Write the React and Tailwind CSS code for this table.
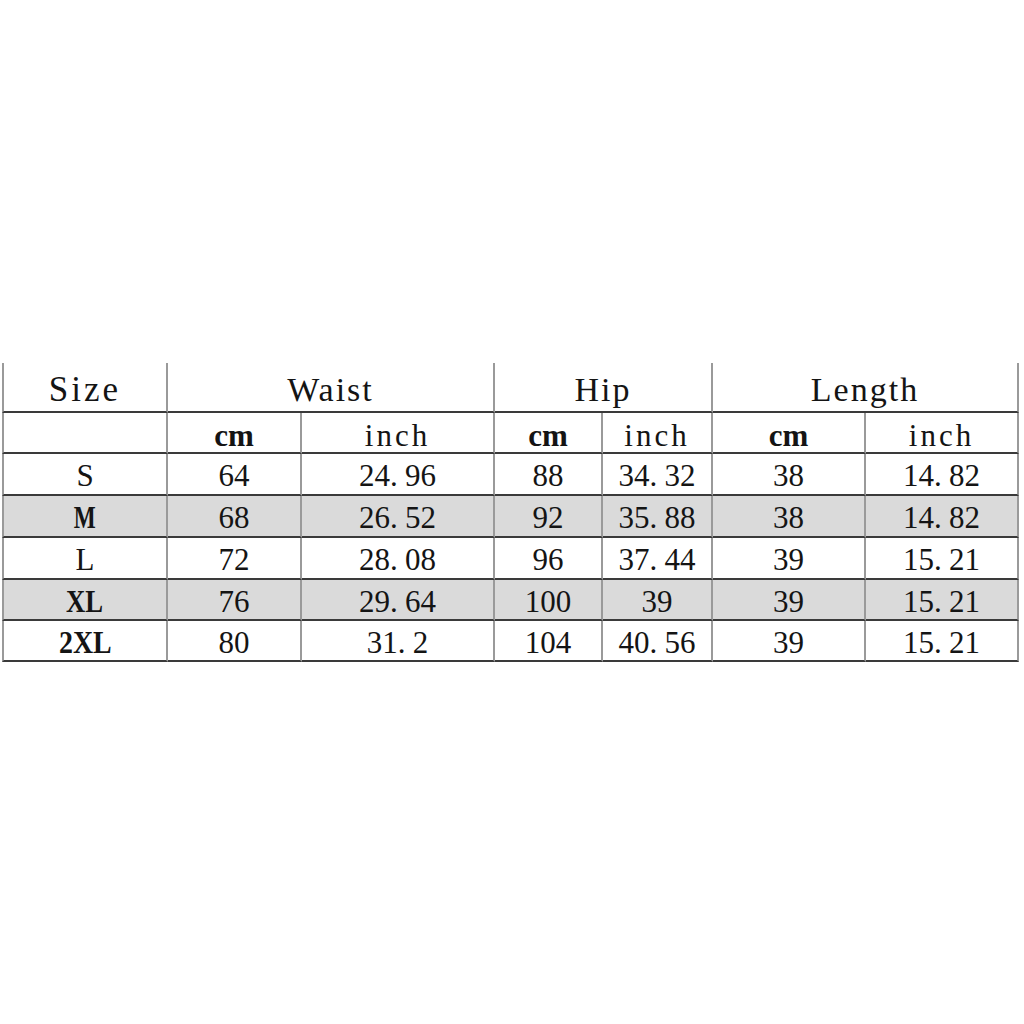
const rows = [
  { size: 'S', bold: '', gray: false, v: ['64', '24.96', '88', '34.32', '38', '14.82'] },
  { size: 'M', bold: 'font-bold scale-x-75', gray: true, v: ['68', '26.52', '92', '35.88', '38', '14.82'] },
  { size: 'L', bold: '', gray: false, v: ['72', '28.08', '96', '37.44', '39', '15.21'] },
  { size: 'XL', bold: 'font-bold scale-x-[0.86]', gray: true, v: ['76', '29.64', '100', '39', '39', '15.21'] },
  { size: '2XL', bold: 'font-bold scale-x-[0.9]', gray: false, v: ['80', '31.2', '104', '40.56', '39', '15.21'] },
];

const heights = ['h-[42px]', 'h-[42px]', 'h-[42px]', 'h-[41px]', 'h-[41px]'];
const widths = [166, 134, 193, 108, 110, 153, 153];

// SimSun-style numbers: the dot takes a full half-width cell
function Num({ value }) {
  const [a, b] = value.split('.');
  if (b === undefined) return <span>{a}</span>;
  return (
    <span>
      {a}
      <span className="inline-block w-[15px] text-left">.</span>
      {b}
    </span>
  );
}

const cell = 'border-r-2 border-b-2 border-r-[#9a9a9a] border-b-[#3a3a3a] text-center align-middle p-0';

export default function App() {
  return (
    <div
      className="min-h-[1024px] w-[1024px] bg-white flex items-center pl-[2px] text-[#141414]"
      style={{ fontFamily: "'Liberation Serif', 'DejaVu Serif', serif" }}
    >
      <table className="table-fixed border-separate border-spacing-0 w-[1017px] text-[31px] leading-none">
        <colgroup>
          {widths.map((w, i) => (
            <col key={i} style={{ width: w }} />
          ))}
        </colgroup>
        <thead>
          <tr className="h-[50px] text-[34px] tracking-[2px]">
            <th className={`${cell} border-l-2 border-l-[#9a9a9a] font-normal pt-[6px] text-[35px] tracking-[3px]`}>Size</th>
            <th colSpan={2} className={`${cell} font-normal pt-[6px]`}>Waist</th>
            <th colSpan={2} className={`${cell} font-normal pt-[6px]`}>Hip</th>
            <th colSpan={2} className={`${cell} font-normal pt-[6px]`}>Length</th>
          </tr>
          <tr className="h-[41px]">
            <th className={`${cell} border-l-2 border-l-[#9a9a9a]`}></th>
            <th className={`${cell} font-bold pt-[6px]`}>cm</th>
            <th className={`${cell} font-normal tracking-[3px] pt-[6px]`}>inch</th>
            <th className={`${cell} font-bold pt-[6px]`}>cm</th>
            <th className={`${cell} font-normal tracking-[3px] pt-[6px]`}>inch</th>
            <th className={`${cell} font-bold pt-[6px]`}>cm</th>
            <th className={`${cell} font-normal tracking-[3px] pt-[6px]`}>inch</th>
          </tr>
        </thead>
        <tbody>
          {rows.map((r, i) => (
            <tr key={r.size} className={`${heights[i]} ${r.gray ? 'bg-[#dadada]' : 'bg-white'}`}>
              <td className={`${cell} border-l-2 border-l-[#9a9a9a] pt-[4px]`}>
                <span className={`inline-block ${r.bold}`}>{r.size}</span>
              </td>
              {r.v.map((v, j) => (
                <td key={j} className={`${cell} pt-[4px]`}>
                  <Num value={v} />
                </td>
              ))}
            </tr>
          ))}
        </tbody>
      </table>
    </div>
  );
}
